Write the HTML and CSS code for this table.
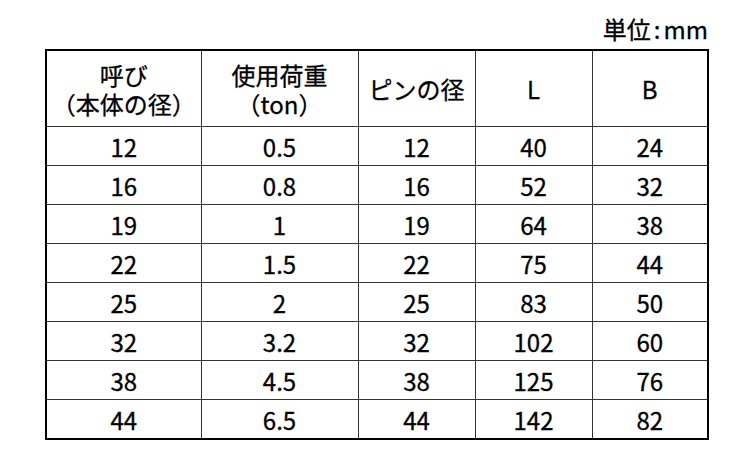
FILE: index.html
```html
<!DOCTYPE html>
<html lang="ja">
<head>
<meta charset="utf-8">
<link rel="stylesheet" href="styles.css">
</head>
<body>
<div class="wrap">
  <div class="unit">単位<span class="colon">:</span>mm</div>
  <table class="spec">
    <colgroup>
      <col class="c1"><col class="c2"><col class="c3"><col class="c4"><col class="c5">
    </colgroup>
    <thead>
      <tr>
        <th>呼び<br>（本体の径）</th>
        <th>使用荷重<br>（ton）</th>
        <th>ピンの径</th>
        <th>L</th>
        <th>B</th>
      </tr>
    </thead>
    <tbody>
      <tr><td>12</td><td>0.5</td><td>12</td><td>40</td><td>24</td></tr>
      <tr><td>16</td><td>0.8</td><td>16</td><td>52</td><td>32</td></tr>
      <tr><td>19</td><td>1</td><td>19</td><td>64</td><td>38</td></tr>
      <tr><td>22</td><td>1.5</td><td>22</td><td>75</td><td>44</td></tr>
      <tr><td>25</td><td>2</td><td>25</td><td>83</td><td>50</td></tr>
      <tr><td>32</td><td>3.2</td><td>32</td><td>102</td><td>60</td></tr>
      <tr><td>38</td><td>4.5</td><td>38</td><td>125</td><td>76</td></tr>
      <tr><td>44</td><td>6.5</td><td>44</td><td>142</td><td>82</td></tr>
    </tbody>
  </table>
</div>
</body>
</html>
```

FILE: styles.css
```css
html, body {
  margin: 0;
  padding: 0;
  background: #fff;
}
body {
  font-family: "Noto Sans CJK JP", "Noto Sans", sans-serif;
  color: #000;
  -webkit-text-stroke: 0.3px #000;
}
.wrap {
  width: 661px;
  margin-left: 45px;
  padding-top: 12px;
}
.unit {
  text-align: right;
  font-size: 24px;
  line-height: 34px;
  height: 37px;
  margin-right: -2px;
}
.colon {
  margin: 0 3px;
}
.spec {
  width: 662px;
  border-collapse: collapse;
  table-layout: fixed;
  border: 2px solid #000;
}
.c1 { width: 155px; }
.c2 { width: 157px; }
.c3 { width: 117px; }
.c4 { width: 117px; }
.c5 { width: 116px; }
.spec th, .spec td {
  border: 1px solid #333;
  text-align: center;
  padding: 0;
  font-weight: normal;
  font-size: 24px;
}
.spec th {
  height: 75px;
  line-height: 29px;
}
.spec td {
  padding-top: 2px;
  line-height: 36px;
}
```
